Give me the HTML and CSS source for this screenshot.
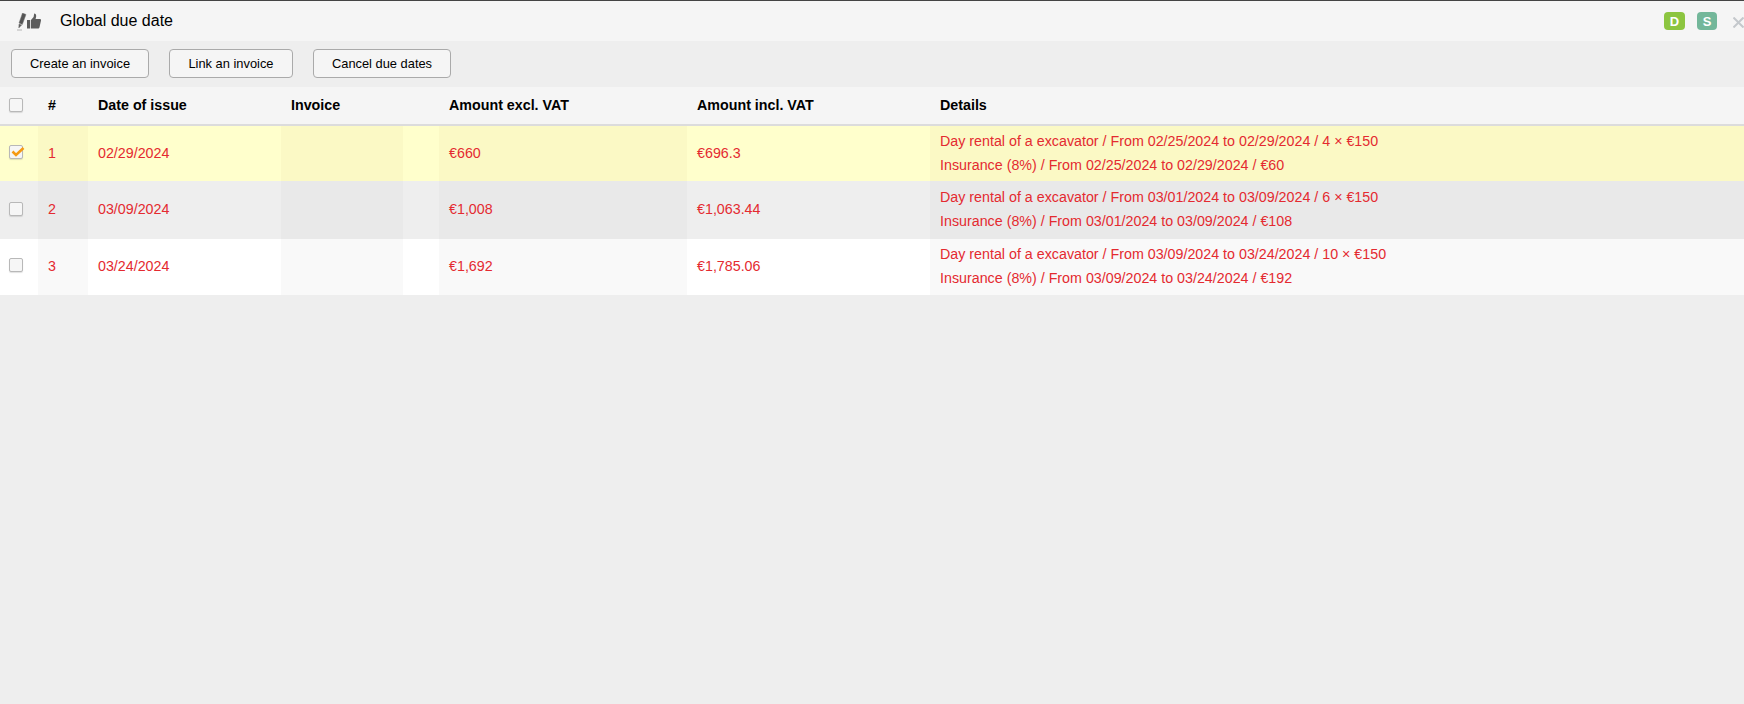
FILE: index.html
```html
<!DOCTYPE html>
<html lang="en">
<head>
<meta charset="utf-8">
<title>Global due date</title>
<link rel="stylesheet" href="styles.css">
</head>
<body>
<div class="topline"></div>
<header class="titlebar">
  <svg class="logo" width="24" height="18" viewBox="0 0 24 18"><path class="pen" d="M5.500 0l3.500 1.500-3.700 10L2 10zM2 11l2.600 1.100L1.800 15zM0 17h5" /><path class="thumb" d="M10 7h3.200v8.500H10zM14 7l2.600-3 .6-3.500c1.700.1 2.200 1.700 1.900 3.200L18.600 6H23c.8 0 1.200.8 1 1.600l-1.500 6.700c-.2.800-.8 1.200-1.600 1.200H14z"/></svg>
  <h1 class="title">Global due date</h1>
  <div class="tools">
    <span class="badge badge-d">D</span>
    <span class="badge badge-s">S</span>
    <svg class="close" width="11" height="11" viewBox="0 0 11 11"><path d="M.5.500l10 10M10.500.500l-10 10"/></svg>
  </div>
</header>
<nav class="toolbar">
  <button class="btn btn-create">Create an invoice</button>
  <button class="btn btn-link">Link an invoice</button>
  <button class="btn btn-cancel">Cancel due dates</button>
</nav>
<table class="grid">
  <colgroup>
    <col class="c1"><col class="c2"><col class="c3"><col class="c4"><col class="c5"><col class="c6"><col class="c7"><col class="c8">
  </colgroup>
  <thead>
    <tr>
      <th><span class="box"></span></th>
      <th>#</th>
      <th>Date of issue</th>
      <th colspan="2">Invoice</th>
      <th>Amount excl. VAT</th>
      <th>Amount incl. VAT</th>
      <th>Details</th>
    </tr>
  </thead>
  <tbody>
    <tr class="selected">
      <td><span class="box"><svg class="tick" width="14" height="12" viewBox="0 0 14 12"><path d="M2.500 5.500l3.500 3.500 7.500-7"/></svg></span></td>
      <td>1</td><td>02/29/2024</td><td></td><td></td><td>€660</td><td>€696.3</td>
      <td class="details">Day rental of a excavator / From 02/25/2024 to 02/29/2024 / 4 × €150<br>Insurance (8%) / From 02/25/2024 to 02/29/2024 / €60</td>
    </tr>
    <tr class="even">
      <td><span class="box"></span></td>
      <td>2</td><td>03/09/2024</td><td></td><td></td><td>€1,008</td><td>€1,063.44</td>
      <td class="details">Day rental of a excavator / From 03/01/2024 to 03/09/2024 / 6 × €150<br>Insurance (8%) / From 03/01/2024 to 03/09/2024 / €108</td>
    </tr>
    <tr class="odd">
      <td><span class="box"></span></td>
      <td>3</td><td>03/24/2024</td><td></td><td></td><td>€1,692</td><td>€1,785.06</td>
      <td class="details">Day rental of a excavator / From 03/09/2024 to 03/24/2024 / 10 × €150<br>Insurance (8%) / From 03/09/2024 to 03/24/2024 / €192</td>
    </tr>
  </tbody>
</table>
</body>
</html>
```
FILE: styles.css
```css
* { box-sizing: border-box; }
html, body { margin: 0; height: 100%; }
body { background: #eeeeee; font-family: "Liberation Sans", Arial, sans-serif; font-size: 14px; color: #000; overflow: hidden; }
.topline { height: 1px; background: #444; }
.titlebar { height: 40px; background: #f5f5f5; display: flex; align-items: center; padding-left: 17px; }
.logo { flex: none; margin-top: 2px; }
.pen { fill: #555; stroke: #777; stroke-width: .5; }
.thumb { fill: #5c5c5c; }
.title { margin: 0 0 0 19px; font-size: 16px; font-weight: normal; }
.tools { margin-left: auto; display: flex; align-items: center; }
.badge { width: 21px; height: 18px; border-radius: 4px; color: #fff; font-size: 13px; font-weight: bold; display: flex; align-items: center; justify-content: center; }
.badge-d { background: #8cc540; margin-right: 12px; }
.badge-s { background: #73b79a; width: 20px; margin-right: 16px; }
.close { flex: none; margin-top: 3px; }
.close path { stroke: #c4c8cc; stroke-width: 2; fill: none; }
.toolbar { height: 46px; display: flex; align-items: flex-start; padding: 8px 0 0 11px; }
.btn { height: 29px; padding: 0; background: #f5f5f5; border: 1px solid #aaa; border-radius: 4px; font: 12.870px "Liberation Sans", Arial, sans-serif; color: #000; }
.btn-create { width: 138px; }
.btn-link { width: 124px; margin-left: 20px; }
.btn-cancel { width: 138px; margin-left: 20px; }
.grid { width: 1744px; table-layout: fixed; border-collapse: separate; border-spacing: 0; }
.c1 { width: 38px; } .c2 { width: 50px; } .c3 { width: 193px; } .c4 { width: 122px; }
.c5 { width: 36px; } .c6 { width: 248px; } .c7 { width: 243px; } .c8 { width: 814px; }
th, td { padding: 0 10px; text-align: left; font-size: 14.280px; }
th { height: 39px; padding-bottom: 2px; background: #f5f5f5; font-weight: bold; border-bottom: 2px solid #dcdcdc; }
td { color: #e42a30; line-height: 23.500px; }
.selected td { height: 55px; }
.even td { height: 58px; }
.odd td { height: 56px; }
.even .details, .odd .details { padding-bottom: 1px; }
th:first-child, td:first-child { padding: 0 0 0 9px; }
.box { display: block; position: relative; top: -1.500px; width: 14px; height: 14px; background: #f6f6f6; border: 1px solid #b8b8b8; border-radius: 2px; box-shadow: 0 1px 1px rgba(0,0,0,.12); }
th .box { top: -.500px; }
.even .box { top: -1px; }
.odd .box { top: -2px; }
.tick { position: absolute; left: 0; top: 0; overflow: visible; }
.tick path { fill: none; stroke: #f59a14; stroke-width: 2.500; }
.selected td { background: #ffffcc; }
.even td { background: #eeeeee; }
.odd td { background: #ffffff; }
.selected td:nth-child(even) { background: #fbf9c5; }
.even td:nth-child(even) { background: #e9e9e9; }
.odd td:nth-child(even) { background: #f9f9f9; }
```
